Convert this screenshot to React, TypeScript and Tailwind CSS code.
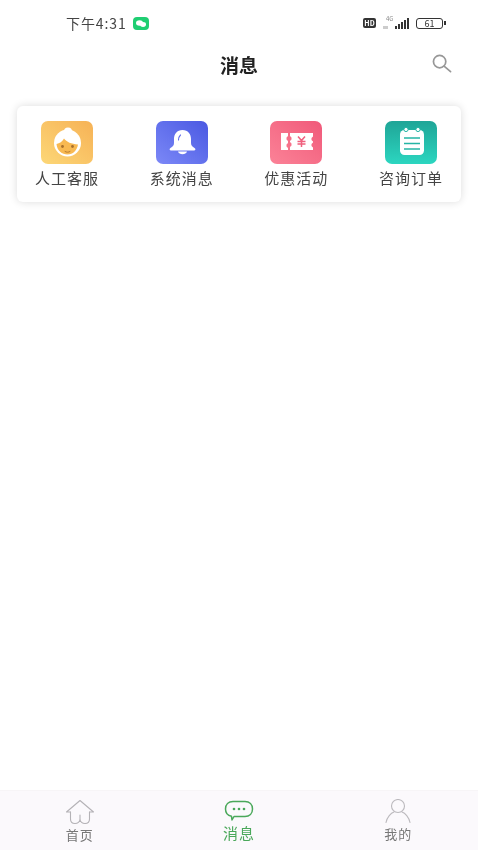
const font = { fontFamily: '"Noto Sans CJK SC", "Liberation Sans", sans-serif' };

const ServiceIcon = () => (
  <svg viewBox="0 0 52 43" className="w-full h-full">
    <circle cx="26.500" cy="22" r="13.500" fill="#fff" />
    <circle cx="27" cy="10.500" r="4" fill="#fff" />
    <path d="M15.500 23c3-.5 6-2.500 7.500-5.500 2.500 3.500 7.500 5.500 14 6-1 6-5 10-10.500 10S16 29.500 15.500 23z" fill="#f8b952" />
    <circle cx="21.500" cy="25.500" r="1.400" fill="#a8702c" />
    <circle cx="31.500" cy="25.500" r="1.400" fill="#a8702c" />
    <path d="M24 30.500c1.500 1 3.500 1 5 0" stroke="#b67c32" strokeWidth="1" fill="none" strokeLinecap="round" />
  </svg>
);

const BellIcon = () => (
  <svg viewBox="0 0 52 43" className="w-full h-full">
    <path d="M26.500 9c-5.500 0-8.500 4-8.500 9v4c0 2.500-1.500 3.500-3.500 5-1.500 1-1 2.500.5 2.500h23c1.500 0 2-1.500.5-2.500-2-1.500-3.500-2.500-3.500-5v-4c0-5-3-9-8.500-9z" fill="#fff" />
    <path d="M22 30.500h9c-.5 1.800-2.500 2.800-4.500 2.800s-4-1-4.500-2.800z" fill="#fff" />
    <path d="M22.500 19c0-2.200.8-3.800 2-5" stroke="#5f6ceb" strokeWidth="1.100" fill="none" strokeLinecap="round" />
  </svg>
);

const TicketIcon = () => (
  <svg viewBox="0 0 52 43" className="w-full h-full">
    <path d="M11 12h7v3l-1.500 1.500v2L18 20v2l-1.500 1.500v2L18 27v2h-7z" fill="#fff" />
    <path d="M20 12h23v3.500l-1.500 1.500v2l1.500 1.500v1l-1.500 1.500v2l1.500 1.500V29H20v-3l1.500-1.500v-2L20 21v-1l1.500-1.500v-2L20 15z" fill="#fff" />
    <path d="M28 15.500l3.500 4 3.500-4M31.500 19.500v6.500M27.500 20.500h8M27.500 23h8" stroke="#f0607e" strokeWidth="1.500" fill="none" />
  </svg>
);

const NotesIcon = () => (
  <svg viewBox="0 0 52 43" className="w-full h-full">
    <rect x="15" y="9" width="24" height="25" rx="4.500" fill="#fff" />
    <circle cx="21" cy="8.500" r="2.100" fill="#fff" stroke="#25b5a5" strokeWidth="1" />
    <circle cx="33" cy="8.500" r="2.100" fill="#fff" stroke="#25b5a5" strokeWidth="1" />
    <path d="M19 17h16M19 22.500h16M19 28h16" stroke="#25b5a5" strokeWidth="1.500" />
  </svg>
);

const entries = [
  { label: "人工客服", box: "bg-gradient-to-tr from-[#fcd777] to-[#f6b256]", icon: <ServiceIcon /> },
  { label: "系统消息", box: "bg-gradient-to-tr from-[#7c88f7] to-[#4b58e2]", icon: <BellIcon /> },
  { label: "优惠活动", box: "bg-gradient-to-tr from-[#fb8297] to-[#f0597a]", icon: <TicketIcon /> },
  { label: "咨询订单", box: "bg-gradient-to-b from-[#1fa597] to-[#2cd6c0]", icon: <NotesIcon /> },
];

const StatusBar = () => (
  <div className="h-[46px] pl-[66px] pr-[32px] flex items-center justify-between">
    <div className="flex items-center gap-[6px]">
      <span className="text-[14px] leading-none text-[#444] tracking-[0.9px] mt-[-1px]">下午4:31</span>
      <svg width="16" height="13" viewBox="0 0 16 13">
        <rect width="16" height="13" rx="4" fill="#1fce72" />
        <ellipse cx="6.500" cy="6" rx="3.500" ry="2.800" fill="#fff" />
        <ellipse cx="10" cy="7.500" rx="3" ry="2.400" fill="#fff" />
      </svg>
    </div>
    <div className="flex items-center">
      <span className="w-[13px] h-[10px] rounded-[2px] bg-[#333] text-white text-[7px] leading-[10px] font-bold text-center">HD</span>
      <div className="ml-[7px] relative w-[26px] h-[14px]">
        <span className="absolute left-[3px] top-0 text-[6px] leading-none text-[#888]">4G</span>
        <i className="absolute left-0 bottom-[1px] w-[5px] h-[3px] bg-[#ccc]" />
        <div className="absolute right-0 bottom-[1px] flex items-end gap-[1px]">
          <i className="w-[2px] h-[3px] bg-[#333]" />
          <i className="w-[2px] h-[5px] bg-[#333]" />
          <i className="w-[2px] h-[7px] bg-[#333]" />
          <i className="w-[2px] h-[9px] bg-[#333]" />
          <i className="w-[2px] h-[11px] bg-[#333]" />
        </div>
      </div>
      <div className="ml-[7px] w-[27px] h-[11px] rounded-[3px] border border-[#333] text-[9px] leading-[9px] text-center text-[#333]">61</div>
      <i className="ml-[1px] w-[2px] h-[4px] bg-[#333]" />
    </div>
  </div>
);

const TabHome = () => (
  <svg width="30" height="26" viewBox="0 0 30 26" fill="none" stroke="#b4b2b6" strokeWidth="1.100" strokeLinejoin="round" strokeLinecap="round">
    <path d="M5.500 13H1.500L15 1.500 28.500 13h-4" />
    <path d="M5.500 13v7c0 3 2 4.500 4.500 4.500s5-1.500 5-4.500v-4M24.500 13v7c0 3-2 4.500-4.500 4.500s-5-1.500-5-4.500" />
  </svg>
);

const TabChat = () => (
  <svg width="30" height="23" viewBox="0 0 30 23" fill="none">
    <path d="M9 1.500h12c4.500 0 7.500 3 7.500 7.500s-3 7.500-7.500 7.500H10l-2 3.500-.5-3.700C3.500 15.500 1.500 13 1.500 9 1.500 4.500 4.500 1.500 9 1.500z" stroke="#4aa85a" strokeWidth="1.500" strokeLinejoin="round" />
    <circle cx="10" cy="9" r="1.300" fill="#4aa85a" />
    <circle cx="15" cy="9" r="1.300" fill="#4aa85a" />
    <circle cx="20" cy="9" r="1.300" fill="#4aa85a" />
  </svg>
);

const TabUser = () => (
  <svg width="26" height="24" viewBox="0 0 26 24" fill="none" stroke="#bbb9bd" strokeWidth="1.100" strokeLinecap="round">
    <circle cx="13" cy="7" r="6.500" />
    <path d="M1 23.500c1-5.500 5-9.500 8-10.500M25 23.500c-1-5.500-5-9.500-8-10.500" />
  </svg>
);

const App = () => {
  return (
    <div className="w-[478px] h-[850px] bg-white flex flex-col overflow-hidden blur-[0.5px]" style={font}>
      <StatusBar />
      <div className="h-[38px] relative flex items-center justify-center">
        <h1 className="text-[19px] font-bold text-[#222] leading-none mt-[-2px]">消息</h1>
        <svg className="absolute right-[26px] top-[8px]" width="20" height="19" viewBox="0 0 21 20" fill="none" stroke="#979797" strokeWidth="1.800" strokeLinecap="round">
          <circle cx="8" cy="8" r="6.500" />
          <path d="M13 13l6.500 5.500" />
        </svg>
      </div>
      <div className="mt-[22px] mx-[17px] h-[96px] rounded-[6px] bg-white shadow-[0_0_8px_rgba(0,0,0,0.14)] px-[18px] pt-[15px] flex justify-between">
        {entries.map((e) => (
          <div key={e.label} className="w-[64px] flex flex-col items-center">
            <div className={`w-[52px] h-[43px] rounded-[7px] ${e.box}`}>{e.icon}</div>
            <span className="mt-[5px] text-[15px] leading-[18px] text-[#444] tracking-[1px] whitespace-nowrap">{e.label}</span>
          </div>
        ))}
      </div>
      <div className="flex-1" />
      <div className="h-[60px] bg-[#fbf9fc] border-t border-[#f7f5f7] grid grid-cols-3 justify-items-center">
        <div className="flex flex-col items-center pt-[8px] w-[80px]">
          <TabHome />
          <span className="mt-[2px] text-[13px] leading-[16px] tracking-[1px] text-[#777]">首页</span>
        </div>
        <div className="flex flex-col items-center pt-[9px] w-[80px]">
          <TabChat />
          <span className="mt-[1px] text-[15px] leading-[18px] tracking-[1px] text-[#4aa85a]">消息</span>
        </div>
        <div className="flex flex-col items-center pt-[8px] w-[80px]">
          <TabUser />
          <span className="mt-[3px] text-[13px] leading-[16px] tracking-[1px] text-[#777]">我的</span>
        </div>
      </div>
    </div>
  );
};

export default App;
